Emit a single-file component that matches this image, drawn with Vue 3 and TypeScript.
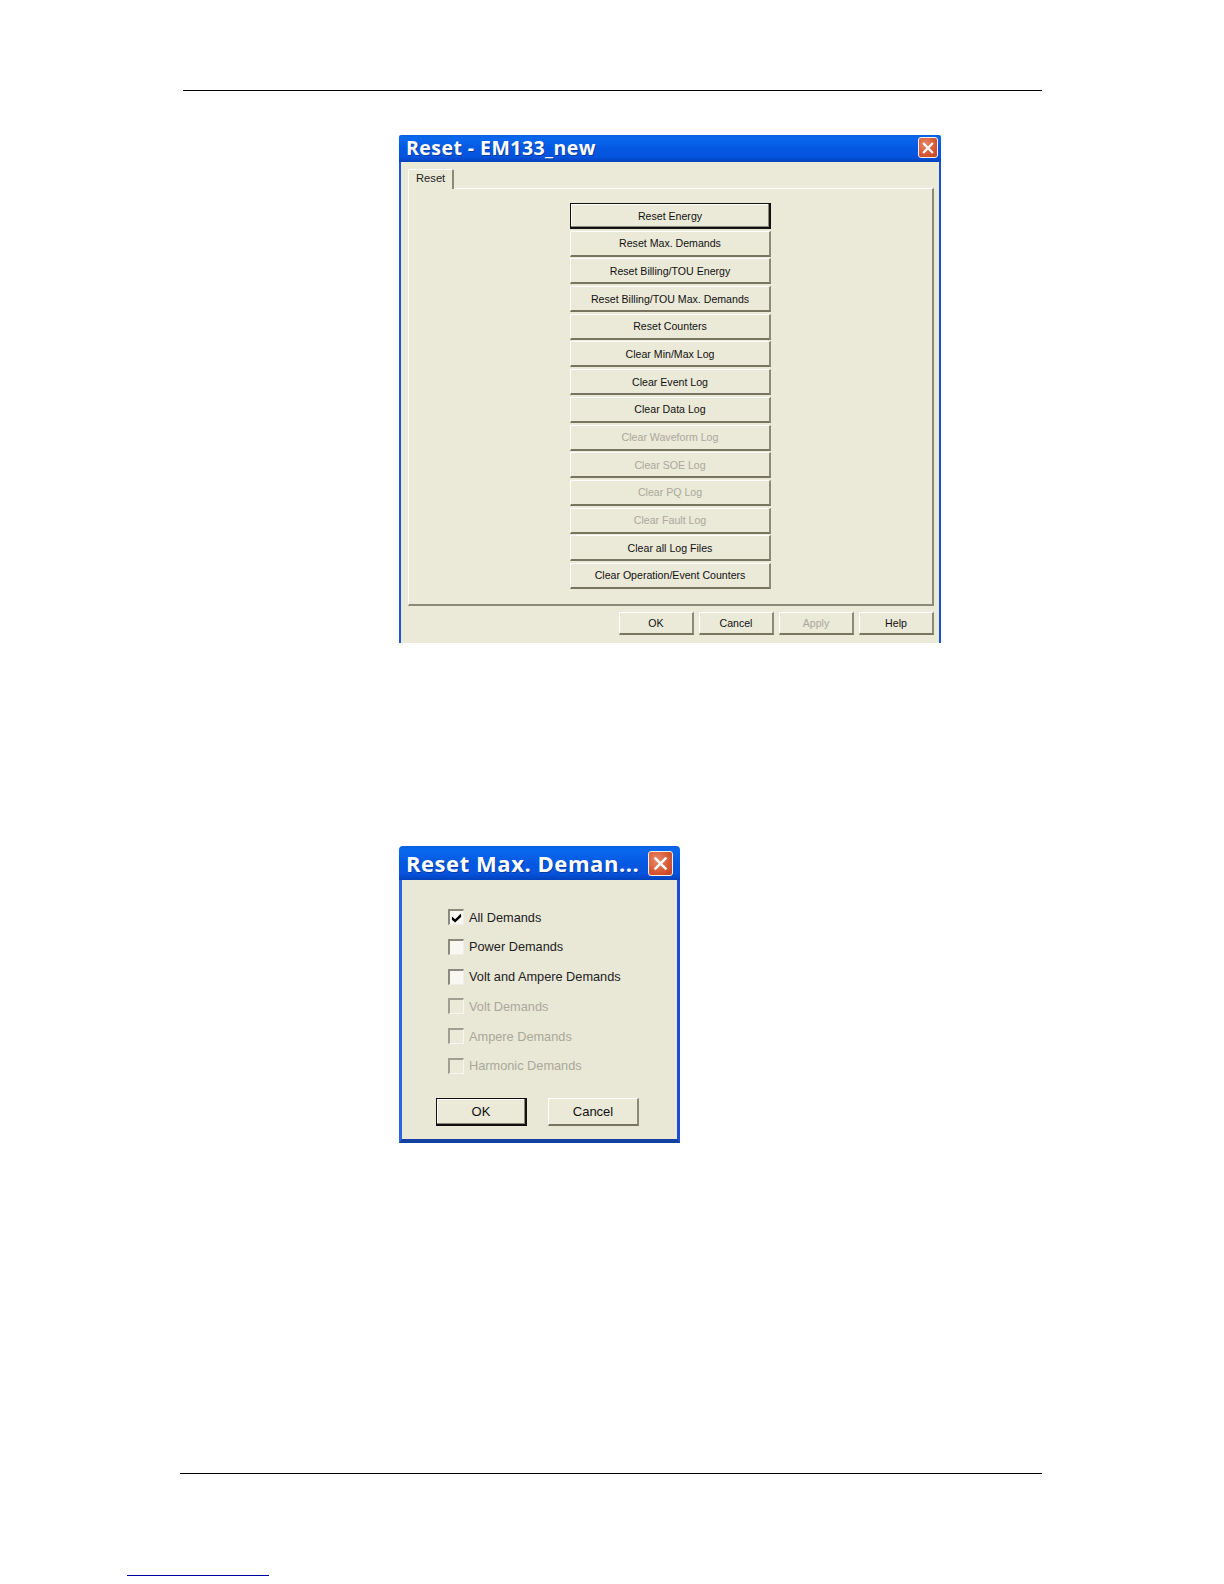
<script setup lang="ts">
const resetButtons: { label: string; disabled?: boolean; focus?: boolean }[] = [
  { label: 'Reset Energy', focus: true },
  { label: 'Reset Max. Demands' },
  { label: 'Reset Billing/TOU Energy' },
  { label: 'Reset Billing/TOU Max. Demands' },
  { label: 'Reset Counters' },
  { label: 'Clear Min/Max Log' },
  { label: 'Clear Event Log' },
  { label: 'Clear Data Log' },
  { label: 'Clear Waveform Log', disabled: true },
  { label: 'Clear SOE Log', disabled: true },
  { label: 'Clear PQ Log', disabled: true },
  { label: 'Clear Fault Log', disabled: true },
  { label: 'Clear all Log Files' },
  { label: 'Clear Operation/Event Counters' },
]
const footerButtons: { label: string; disabled?: boolean }[] = [
  { label: 'OK' },
  { label: 'Cancel' },
  { label: 'Apply', disabled: true },
  { label: 'Help' },
]
const checks: { label: string; checked?: boolean; disabled?: boolean }[] = [
  { label: 'All Demands', checked: true },
  { label: 'Power Demands' },
  { label: 'Volt and Ampere Demands' },
  { label: 'Volt Demands', disabled: true },
  { label: 'Ampere Demands', disabled: true },
  { label: 'Harmonic Demands', disabled: true },
]
</script>

<template>
  <div class="page">
    <div class="rule-top"></div>

    <section class="dialog dialog-main">
      <header class="titlebar">
        <span class="title">Reset - EM133_new</span>
        <span class="close">
          <svg viewBox="0 0 20 20" width="14" height="14"><path d="M3 3 L17 17 M17 3 L3 17" stroke="#fff" stroke-width="3" fill="none" /></svg>
        </span>
      </header>
      <div class="main-body">
        <div class="tabstrip"><span class="tab">Reset</span></div>
        <div class="panel">
          <button
            v-for="b in resetButtons"
            :key="b.label"
            class="xp-btn"
            :class="{ off: b.disabled, focus: b.focus }"
          >{{ b.label }}</button>
        </div>
        <div class="footer">
          <button
            v-for="b in footerButtons"
            :key="b.label"
            class="xp-btn foot-btn"
            :class="{ off: b.disabled }"
          >{{ b.label }}</button>
        </div>
      </div>
    </section>

    <section class="dialog dialog-small">
      <header class="titlebar small-bar">
        <span class="title small-title">Reset Max. Deman...</span>
        <span class="close small-close">
          <svg viewBox="0 0 20 20" width="17" height="17"><path d="M3 3 L17 17 M17 3 L3 17" stroke="#fff" stroke-width="3" fill="none" /></svg>
        </span>
      </header>
      <div class="small-body">
        <div class="checks">
          <label v-for="c in checks" :key="c.label" class="check" :class="{ off: c.disabled }">
            <span class="box">
              <svg v-if="c.checked" viewBox="0 0 12 12" width="11" height="11"><path d="M1 5 L4.5 8 L11 1.5 L11 5.5 L4.5 11.5 L1 8.5 Z" fill="#000" /></svg>
            </span>
            <span>{{ c.label }}</span>
          </label>
        </div>
        <div class="small-actions">
          <button class="xp-btn small-btn focus">OK</button>
          <button class="xp-btn small-btn">Cancel</button>
        </div>
      </div>
    </section>

    <div class="rule-bottom"></div>
    <div class="link-line"></div>
  </div>
</template>

<style>
html, body { margin: 0; background: #fff; }
</style>

<style scoped>
.page {
  width: 1224px;
  height: 1584px;
  padding-top: 90px;
  box-sizing: border-box;
  overflow: hidden;
  background: #fff;
  font-family: "Liberation Sans", "Noto Sans", sans-serif;
  color: #000;
}
.rule-top {
  width: 859px;
  height: 1px;
  margin-left: 183px;
  background: #000;
}
.dialog {
  margin-left: 399px;
  box-sizing: border-box;
}
.dialog-main {
  width: 542px;
  height: 508px;
  margin-top: 44px;
  display: flex;
  flex-direction: column;
}
.titlebar {
  display: flex;
  align-items: center;
  justify-content: space-between;
  height: 27px;
  flex: none;
  box-sizing: border-box;
  padding: 0 3px 2px 7px;
  border-radius: 2px 2px 0 0;
  background: linear-gradient(180deg, #0a5fe0 0%, #0868ee 12%, #0558e2 50%, #0654de 80%, #0342bc 100%);
}
.title {
  color: #fff;
  font-family: "Open Sans", sans-serif;
  font-weight: 700;
  font-size: 19.5px;
  letter-spacing: 0.45px;
  line-height: 25px;
  white-space: nowrap;
  text-shadow: 1px 1px 0 #0a3a9a;
}
.close {
  width: 20px;
  height: 21px;
  box-sizing: border-box;
  border: 1px solid #f4f0ea;
  border-radius: 3px;
  background: radial-gradient(circle at 35% 35%, #e88a6c 0%, #d95a36 55%, #c2401e 100%);
  display: flex;
  align-items: center;
  justify-content: center;
}
.main-body {
  flex: 1;
  box-sizing: border-box;
  background: #ebe9d8;
  border-left: 2px solid #1a55dc;
  border-right: 2px solid #1a4fd0;
  padding: 7px 5px 0 7px;
  display: flex;
  flex-direction: column;
}
.tabstrip {
  height: 19px;
  display: flex;
  flex: none;
}
.tab {
  width: 46px;
  box-sizing: border-box;
  height: 20px;
  margin-bottom: -1px;
  position: relative;
  z-index: 1;
  background: #ebe9d8;
  border-top: 1px solid #fff;
  border-left: 1px solid #fff;
  border-right: 2px solid #8b8978;
  border-radius: 2px 2px 0 0;
  font-size: 11.2px;
  line-height: 17px;
  padding-left: 7px;
  color: #222;
}
.panel {
  height: 418px;
  flex: none;
  box-sizing: border-box;
  border-top: 1px solid #fff;
  border-left: 1px solid #fff;
  border-right: 2px solid #8b8978;
  border-bottom: 2px solid #8b8978;
  padding-top: 14px;
  display: flex;
  flex-direction: column;
  align-items: center;
  gap: 1.7px;
}
.xp-btn {
  display: block;
  appearance: none;
  margin: 0;
  padding: 0;
  width: 201px;
  height: 26px;
  box-sizing: border-box;
  flex: none;
  background: #ebe9d8;
  border-style: solid;
  border-width: 1px 2px 2px 1px;
  border-color: #fff #8b8978 #77755f #fff;
  font-family: "Liberation Sans", "Noto Sans", sans-serif;
  font-size: 10.6px;
  color: #111;
  text-align: center;
}
.xp-btn.off {
  color: #aaa89a;
}
.xp-btn.focus {
  border-width: 1px 2px 2px 1px;
  border-color: #111;
  box-shadow: inset -1px -1px 0 #8b8978, inset 1px 1px 0 #fff;
}
.footer {
  display: flex;
  justify-content: flex-end;
  gap: 5px;
  padding-top: 6px;
}
.foot-btn {
  width: 75px;
  height: 23px;
}
.dialog-small {
  width: 281px;
  height: 297px;
  margin-top: 203px;
  display: flex;
  flex-direction: column;
}
.small-bar {
  height: 34px;
  padding: 0 7px 0 7px;
  border-radius: 4px 4px 0 0;
}
.small-title {
  font-size: 22px;
  letter-spacing: 0.55px;
  line-height: 32px;
}
.small-close {
  width: 25px;
  height: 25px;
}
.small-body {
  flex: 1;
  box-sizing: border-box;
  background: #e9e7d6;
  border-left: 3px solid #2a66e4;
  border-right: 3px solid #1a4fd0;
  border-bottom: 4px solid #12409f;
  padding: 0 0 0 34px;
  display: flex;
  flex-direction: column;
}
.checks {
  display: flex;
  flex-direction: column;
  padding: 27px 0 0 12px;
  gap: 9.8px;
}
.check {
  display: flex;
  align-items: center;
  gap: 5px;
  height: 20px;
  font-size: 12.75px;
  color: #222;
}
.check.off {
  color: #aaa89a;
}
.box {
  width: 16px;
  height: 16px;
  flex: none;
  box-sizing: border-box;
  background: #f8f7f2;
  border-style: solid;
  border-width: 2px 1px 1px 2px;
  border-color: #8a897c #eeeee6 #eeeee6 #8a897c;
  display: flex;
  align-items: center;
  justify-content: center;
}
.check.off .box {
  background: #ebe9d8;
  border-color: #a09e90 #f6f5ee #f6f5ee #a09e90;
}
.small-actions {
  display: flex;
  gap: 21px;
  margin-top: 22px;
}
.small-btn {
  width: 91px;
  height: 28px;
  font-size: 13px;
}
.rule-bottom {
  width: 862px;
  height: 1px;
  margin: 330px 0 0 180px;
  background: #000;
}
.link-line {
  width: 142px;
  height: 1px;
  margin: 101px 0 0 127px;
  background: #0000a0;
}
</style>
